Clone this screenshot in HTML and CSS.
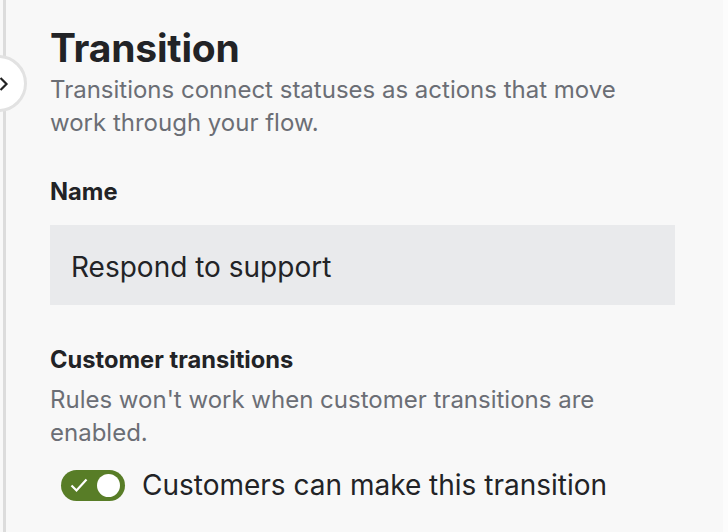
FILE: index.html
```html
<!DOCTYPE html>
<html>
<head>
<meta charset="utf-8">
<link rel="stylesheet" href="styles.css">
</head>
<body>
<div class="page">
  <div class="rail"></div>
  <button class="collapse" aria-label="Collapse">
    <svg width="10" height="16" viewBox="0 0 10 16"><path d="M0.5 2 L6.5 8 L0.5 14" fill="none" stroke="#222" stroke-width="2.2"/></svg>
  </button>
  <main class="panel">
    <h1 class="title">Transition</h1>
    <p class="desc">Transitions connect statuses as actions that move work through your flow.</p>
    <section class="field">
      <label class="label">Name</label>
      <div class="input">Respond to support</div>
    </section>
    <section class="field customer">
      <h2 class="label">Customer transitions</h2>
      <p class="desc small">Rules won't work when customer transitions are enabled.</p>
      <div class="toggle-row">
        <span class="toggle">
          <svg class="check" width="18" height="15" viewBox="0 0 18 15"><path d="M1.5 7.5 L6.5 12.5 L16.5 1.5" fill="none" stroke="#fff" stroke-width="2.2"/></svg>
          <span class="knob"></span>
        </span>
        <span class="toggle-label">Customers can make this transition</span>
      </div>
    </section>
  </main>
  <div class="scroll"></div>
</div>
</body>
</html>
```
FILE: styles.css
```css
* { box-sizing: border-box; }
html, body { margin: 0; padding: 0; }
body {
  background: #f8f8f8;
  font-family: Inter, "Noto Sans", sans-serif;
  color: #222326;
  width: 728px;
  height: 532px;
  overflow: hidden;
}
.page {
  position: relative;
  display: flex;
  height: 532px;
}
.rail {
  width: 3px;
  margin-left: 3px;
  background: #dcdcdc;
  flex: none;
}
.collapse {
  position: absolute;
  left: -30px;
  top: 55px;
  width: 57px;
  height: 57px;
  border-radius: 50%;
  background: #fff;
  border: 3px solid #e2e2e2;
  padding: 0 0 0 27px;
  display: flex;
  align-items: center;
}
.panel {
  flex: 1;
  padding: 23px 48px 0 44px;
}
.scroll {
  width: 5px;
  background: #fcfcfc;
  flex: none;
}
.title {
  margin: 0;
  font-size: 39px;
  font-weight: 700;
  line-height: 50px;
  letter-spacing: -0.2px;
}
.desc {
  margin: 0;
  font-size: 24px;
  line-height: 33px;
  color: #6b6e75;
}
.field { margin-top: 39px; }
.label {
  display: block;
  margin: 0;
  font-size: 23.7px;
  font-weight: 700;
  line-height: 28px;
}
.input {
  margin-top: 19px;
  height: 80px;
  width: 625px;
  background: #e9eaec;
  font-size: 28px;
  padding: 4px 0 0 21px;
  display: flex;
  align-items: center;
}
.customer { margin-top: 41px; }
.desc.small { font-size: 24px; margin-top: 9px; }
.toggle-row {
  display: flex;
  align-items: center;
  margin-top: 19px;
  margin-left: 11px;
  gap: 17px;
}
.toggle {
  width: 64px;
  height: 31px;
  border-radius: 16px;
  background: #587d27;
  display: flex;
  align-items: center;
  justify-content: space-between;
  padding: 0 5px 0 9px;
}
.knob {
  width: 23px;
  height: 23px;
  border-radius: 50%;
  background: #fff;
}
.toggle-label { font-size: 28px; }
```
